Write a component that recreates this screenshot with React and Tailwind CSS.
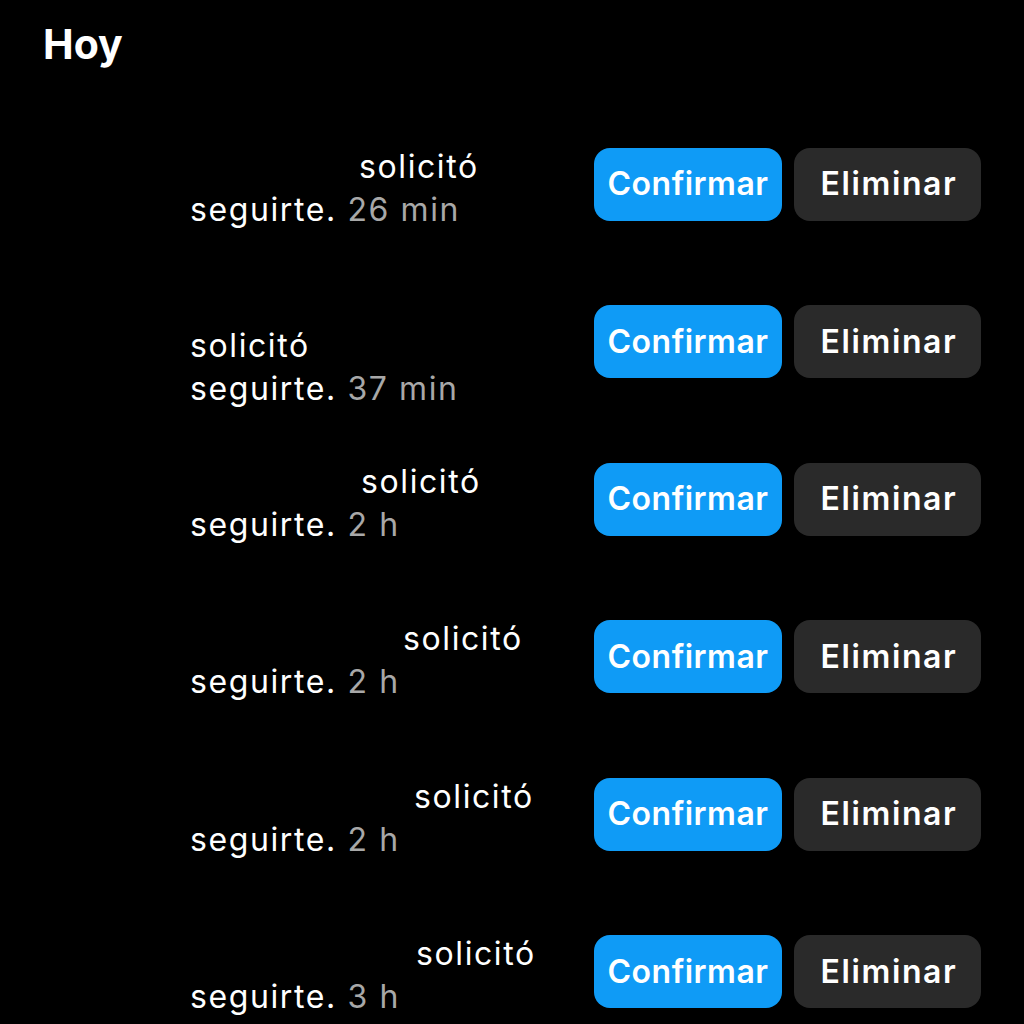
const requests = [
  { lead: 169, time: '26 min' },
  { lead: null, time: '37 min' },
  { lead: 171, time: '2 h' },
  { lead: 213, time: '2 h' },
  { lead: 224, time: '2 h' },
  { lead: 226, time: '3 h' },
]

function RequestRow({ lead, time }) {
  return (
    <div className="flex h-[157.5px] items-center">
      <div className="w-[190px] shrink-0" />
      <div className="flex-1 pt-[7px] text-[32px] leading-[43px] tracking-[0.05em] text-white">
        {lead === null ? (
          <div className="h-[43px]" />
        ) : null}
        <div className="whitespace-nowrap">
          {lead !== null ? <span className="inline-block" style={{ width: lead }} /> : null}
          solicitó
        </div>
        <div className="whitespace-nowrap">
          seguirte. <span className="text-[#a8a8a8]">{time}</span>
        </div>
      </div>
      <div className="flex shrink-0 gap-3 pr-[43px]">
        <button className="h-[73px] w-[188px] rounded-[16px] bg-[#0f9bf6] text-[32px] font-semibold tracking-[0.015em] text-white">
          Confirmar
        </button>
        <button className="h-[73px] w-[187px] rounded-[16px] bg-[#2a2a2a] pl-[3px] text-[32px] font-semibold tracking-[0.05em] text-white">
          Eliminar
        </button>
      </div>
    </div>
  )
}

export default function App() {
  return (
    <div className="h-[1024px] overflow-hidden bg-black font-['Inter','Liberation_Sans',sans-serif]">
      <h2 className="h-[105.5px] pl-[43px] pt-[23px] text-[41px] leading-[42px] font-bold text-white">Hoy</h2>
      {requests.map((item, index) => (
        <RequestRow key={index} {...item} />
      ))}
    </div>
  )
}
